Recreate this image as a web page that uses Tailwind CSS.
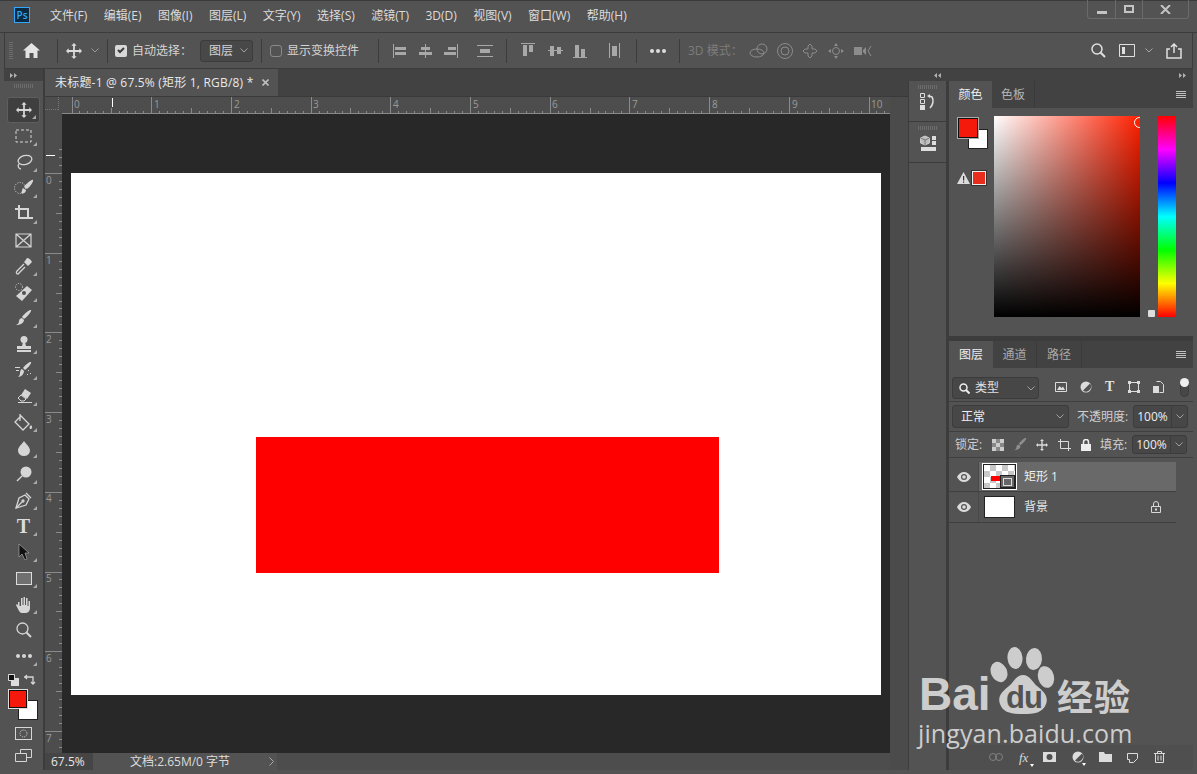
<!DOCTYPE html>
<html lang="zh-CN">
<head>
  <meta charset="UTF-8" />
  <title>未标题-1 @ 67.5% (矩形 1, RGB/8) *</title>
  <script src="https://cdn.jsdelivr.net/npm/@tailwindcss/browser@4"></script>
</head>
<body class="h-screen w-[1197px] overflow-hidden bg-[#535353] text-[12px] text-[#dcdcdc] font-['Open_Sans','Noto_Sans_CJK_SC',sans-serif] relative">

  <!-- shared icons -->
  <svg class="hidden">
    <symbol id="move" viewBox="0 0 18 18"><path fill="currentColor" d="M9 0l3 3h-2v5h5V6l3 3-3 3v-2h-5v5h2l-3 3-3-3h2v-5H3v2L0 9l3-3v2h5V3H6z"/></symbol>
    <symbol id="chev" viewBox="0 0 8 5"><path fill="none" stroke="currentColor" d="M.5.5L4 4 7.500.5"/></symbol>
    <symbol id="menu" viewBox="0 0 10 7"><path fill="none" stroke="currentColor" d="M0 .5h10M0 2.500h10M0 4.500h10M0 6.500h10"/></symbol>
    <symbol id="eye" viewBox="0 0 14 10"><path fill="currentColor" d="M7 0c3 0 5.500 2 7 5-1.500 3-4 5-7 5S1.500 8 0 5c1.500-3 4-5 7-5z"/><circle cx="7" cy="5" r="3" fill="#535353"/><circle cx="7" cy="5" r="1.800" fill="currentColor"/></symbol>
  </svg>

  <!-- title bar -->
  <header class="h-[33px] border-y border-t-[#3a3a3a] border-b-[#3c3c3c] flex items-start">
    <div class="ml-[14px] mt-[6px] w-[16px] h-[16px] border border-[#31a8ff] bg-[#0c2a40] text-[#31a8ff] text-[10px] leading-[14px] text-center font-semibold">Ps</div>
    <nav class="ml-[20px] mt-[6px] flex gap-[16.5px] leading-[18px] whitespace-nowrap">
      <span>文件(F)</span><span>编辑(E)</span><span>图像(I)</span><span>图层(L)</span><span>文字(Y)</span><span>选择(S)</span><span>滤镜(T)</span><span>3D(D)</span><span>视图(V)</span><span>窗口(W)</span><span>帮助(H)</span>
    </nav>
    <div class="ml-auto mr-[8px] h-[19px] w-[102px] -mt-px flex border border-t-0 border-[#6a6a6a] rounded-b-[3px] text-[#c4c4c4]">
      <div class="w-[28px] flex items-center justify-center border-r border-[#6a6a6a]"><i class="block w-[10px] h-[3px] mt-[6px] bg-current"></i></div>
      <div class="w-[27px] flex items-center justify-center border-r border-[#6a6a6a]"><i class="block w-[10px] h-[8px] border-2 border-current"></i></div>
      <div class="flex-1 flex items-center justify-center"><svg width="11" height="9" viewBox="0 0 11 9"><path stroke="currentColor" stroke-width="2" d="M1 0l9 9M10 0L1 9"/></svg></div>
    </div>
  </header>

  <!-- options bar -->
  <section class="h-[36px] mx-[4px] border-x border-b border-[#3c3c3c] flex items-center whitespace-nowrap text-[#d4d4d4]">
    <i class="ml-[4px] block w-[4px] h-[18px] bg-[repeating-linear-gradient(to_bottom,#6c6c6c_0_1px,transparent_1px_2px)]"></i>
    <svg class="ml-[10px] text-[#e4e4e4]" width="17" height="15" viewBox="0 0 17 15"><path fill="currentColor" d="M8.500 0L17 7.500h-2.500V15h-4v-5h-4v5h-4V7.500H0z"/></svg>
    <i class="ml-[17px] block w-px h-[24px] bg-[#3c3c3c]"></i>
    <svg class="ml-[8px] text-[#dcdcdc]" width="16" height="16"><use href="#move"/></svg>
    <svg class="ml-[9px] text-[#9a9a9a]" width="8" height="5"><use href="#chev"/></svg>
    <i class="ml-[8px] block w-px h-[24px] bg-[#3c3c3c]"></i>
    <span class="ml-[7px] w-[12px] h-[12px] rounded-[2px] bg-[#d8d8d8] flex items-center justify-center"><svg width="8" height="7" viewBox="0 0 8 7"><path fill="none" stroke="#3c3c3c" stroke-width="2" d="M1 3l2 2 4-4"/></svg></span>
    <span class="ml-[5px] w-[59px]">自动选择：</span>
    <div class="ml-[9px] w-[53px] h-[22px] rounded-[3px] border border-[#3c3c3c] bg-[#484848] flex items-center justify-between pl-[8px] pr-[4px]"><span>图层</span><svg class="text-[#a0a0a0]" width="8" height="5"><use href="#chev"/></svg></div>
    <i class="ml-[8px] block w-px h-[24px] bg-[#3c3c3c]"></i>
    <span class="ml-[8px] w-[12px] h-[12px] rounded-[3px] border border-[#8a8a8a]"></span>
    <span class="ml-[5px] w-[70px]">显示变换控件</span>
    <i class="ml-[21px] block w-px h-[24px] bg-[#3c3c3c]"></i>
    <svg class="ml-[14px] text-[#a8a8a8]" width="100" height="18" viewBox="0 0 100 18" fill="currentColor">
      <path d="M0 2h1v14H0zM2 5h11v3H2zM2 10h11v3H2z"/>
      <path d="M32 2h1v14h-1zM28 5h9v3h-9zM26 10h13v3H26z"/>
      <path d="M64 2h1v14h-1zM55 5h8v3h-8zM51 10h12v3H51z"/>
      <path d="M84 3h16v1H84zM84 14h16v1H84zM87 7h10v4H87z"/>
    </svg>
    <i class="ml-[13px] block w-px h-[24px] bg-[#3c3c3c]"></i>
    <svg class="ml-[14px] text-[#a8a8a8]" width="99" height="18" viewBox="0 0 99 18" fill="currentColor">
      <path d="M0 1h14v1H0zM2 3h4v11H2zM8 3h4v7H8z"/>
      <path d="M27 8h15v1H27zM29 4h4v10h-4zM36 5h4v7h-4z"/>
      <path d="M52 15h14v1H52zM54 3h4v12h-4zM60 7h4v8h-4z"/>
      <path d="M88 1h1v15h-1zM98 1h1v15h-1zM91 4h5v10h-5z"/>
    </svg>
    <i class="ml-[16px] block w-px h-[24px] bg-[#3c3c3c]"></i>
    <svg class="ml-[13px] text-[#dedede]" width="16" height="4" viewBox="0 0 16 4" fill="currentColor"><circle cx="2" cy="2" r="2"/><circle cx="8" cy="2" r="2"/><circle cx="14" cy="2" r="2"/></svg>
    <i class="ml-[13px] block w-px h-[24px] bg-[#3c3c3c]"></i>
    <span class="ml-[8px] w-[52px] text-[#7c7c7c]">3D 模式：</span>
    <svg class="ml-[9px] text-[#8c8c8c]" width="123" height="18" viewBox="0 0 123 18" fill="none" stroke="currentColor">
      <circle cx="13" cy="7" r="5"/><ellipse cx="8" cy="11" rx="7" ry="4"/>
      <circle cx="36" cy="9" r="7.500"/><circle cx="36" cy="9" r="4"/>
      <path d="M61 2l2 2v3h3l2 2-2 2h-3v3l-2 2-2-2v-3h-3l-2-2 2-2h3V4z"/>
      <circle cx="87" cy="9" r="3.500"/><path fill="currentColor" stroke="none" d="M87 1l2 3h-4zM87 17l2-3h-4zM79 9l3-2v4zM95 9l-3-2v4z"/>
      <path fill="currentColor" stroke="none" d="M105 5h8v8h-8zM114 8l3-3v8l-3-3z"/><path d="M122 4l-3 5 3 5"/>
    </svg>
    <svg class="ml-[219px] text-[#e0e0e0]" width="15" height="15" viewBox="0 0 15 15" fill="none" stroke="currentColor"><circle cx="6" cy="6" r="5" stroke-width="1.500"/><path stroke-width="2" d="M9.500 9.500L14 14"/></svg>
    <svg class="ml-[13px] text-[#e0e0e0]" width="16" height="13" viewBox="0 0 16 13"><path fill="none" stroke="currentColor" d="M.5.500h15v12H.5z"/><path fill="currentColor" d="M3 3h3v7H3z"/></svg>
    <svg class="ml-[10px] text-[#a8a8a8]" width="8" height="5"><use href="#chev"/></svg>
    <svg class="ml-[13px] text-[#e0e0e0]" width="16" height="16" viewBox="0 0 16 16" fill="none" stroke="currentColor" stroke-width="1.500"><path d="M4 6H1v9h14V6h-3M8 10V1M5 4l3-3 3 3"/></svg>
  </section>

  <main class="h-[701px] mx-[4px] flex bg-[#3c3c3c]">

    <!-- tools -->
    <aside class="w-[39px] mr-[2px] bg-[#535353] flex flex-col items-center text-[#d6d6d6]">
      <div class="w-full h-[12px] bg-[#424242] flex items-center pl-[6px] text-[#b0b0b0]"><svg width="7" height="5" viewBox="0 0 7 5" fill="currentColor"><path d="M0 0l3 2.500L0 5zM4 0l3 2.500L4 5z"/></svg></div>
      <i class="block mt-[3px] mb-[9px] w-[20px] h-[4px] bg-[repeating-linear-gradient(to_right,#6c6c6c_0_1px,transparent_1px_2px)]"></i>

      <div class="relative w-[33px] h-[26px] rounded-[3px] border border-[#5e5e5e] bg-[#3f3f3f] flex items-center justify-center"><svg width="16" height="16"><use href="#move"/></svg><i class="absolute right-[3px] bottom-[3px] border-l-[4px] border-b-[4px] border-l-transparent border-b-[#aaa]"></i></div>
      <div class="relative w-[33px] h-[26px] flex items-center justify-center"><svg width="17" height="14" viewBox="0 0 17 14"><rect x="1" y="1" width="15" height="12" fill="none" stroke="currentColor" stroke-dasharray="3 2"/></svg><i class="absolute right-[3px] bottom-[3px] border-l-[4px] border-b-[4px] border-l-transparent border-b-[#aaa]"></i></div>
      <div class="relative w-[33px] h-[26px] flex items-center justify-center"><svg width="18" height="16" viewBox="0 0 18 16" fill="none" stroke="currentColor" stroke-width="1.300"><ellipse cx="10" cy="6" rx="7" ry="4.500" transform="rotate(-15 10 6)"/><path d="M4 10c-2 2 0 5 2 5"/></svg><i class="absolute right-[3px] bottom-[3px] border-l-[4px] border-b-[4px] border-l-transparent border-b-[#aaa]"></i></div>
      <div class="relative w-[33px] h-[26px] flex items-center justify-center"><svg width="20" height="18" viewBox="0 0 20 18"><circle cx="6" cy="9" r="5.500" fill="none" stroke="currentColor" stroke-dasharray="1 1.500"/><path fill="currentColor" d="M19 1c1 1-3 7-6 9l-3-2c2-3 8-8 9-7zM9 9l3 2c0 3-3 4-5 3 1-1 1-4 2-5z"/></svg><i class="absolute right-[3px] bottom-[3px] border-l-[4px] border-b-[4px] border-l-transparent border-b-[#aaa]"></i></div>
      <div class="relative w-[33px] h-[26px] flex items-center justify-center"><svg width="18" height="18" viewBox="0 0 18 18" fill="none" stroke="currentColor" stroke-width="2"><path d="M0 4h13v10M4 0v13h14"/></svg><i class="absolute right-[3px] bottom-[3px] border-l-[4px] border-b-[4px] border-l-transparent border-b-[#aaa]"></i></div>
      <div class="relative w-[33px] h-[26px] flex items-center justify-center"><svg width="17" height="15" viewBox="0 0 17 15" fill="none" stroke="currentColor" stroke-width="1.200"><path d="M1 1h15v13H1zM1 1l15 13M16 1L1 14"/></svg></div>
      <div class="relative w-[33px] h-[26px] flex items-center justify-center"><svg width="17" height="17" viewBox="0 0 17 17"><path fill="currentColor" d="M12 0c2 0 4 2 5 4l-3 3-1 1-4-4 1-1z"/><path fill="none" stroke="currentColor" stroke-width="1.300" d="M9 6L2 13c-1 1-1 3 1 3l7-7"/></svg><i class="absolute right-[3px] bottom-[3px] border-l-[4px] border-b-[4px] border-l-transparent border-b-[#aaa]"></i></div>
      <div class="relative w-[33px] h-[26px] flex items-center justify-center"><svg width="19" height="19" viewBox="0 0 19 19"><circle cx="5" cy="4" r="3.500" fill="none" stroke="currentColor" stroke-dasharray="1 1.500"/><path fill="currentColor" d="M13 3l5 4-10 11-6-5z"/><circle cx="10" cy="10" r="2" fill="#535353"/></svg><i class="absolute right-[3px] bottom-[3px] border-l-[4px] border-b-[4px] border-l-transparent border-b-[#aaa]"></i></div>
      <div class="relative w-[33px] h-[26px] flex items-center justify-center"><svg width="16" height="16" viewBox="0 0 16 16" fill="currentColor"><path d="M15 0c1 1-4 7-7 9L6 7c2-3 8-8 9-7zM6 8l2 2c0 3-4 5-8 5 2-1 3-2 3-4 0-2 2-3 3-3z"/></svg><i class="absolute right-[3px] bottom-[3px] border-l-[4px] border-b-[4px] border-l-transparent border-b-[#aaa]"></i></div>
      <div class="relative w-[33px] h-[26px] flex items-center justify-center"><svg width="18" height="16" viewBox="0 0 18 16" fill="currentColor"><circle cx="9" cy="3.500" r="3.500"/><path d="M8 6h2l1 4h5v3H2v-3h5zM2 14h14v2H2z"/></svg><i class="absolute right-[3px] bottom-[3px] border-l-[4px] border-b-[4px] border-l-transparent border-b-[#aaa]"></i></div>
      <div class="relative w-[33px] h-[26px] flex items-center justify-center"><svg width="18" height="16" viewBox="0 0 18 16" fill="currentColor"><path d="M16 0c1 1-3 6-6 8L8 6c2-3 7-7 8-6zM7 7l2 2c0 3-3 6-6 6 1-1 2-2 2-4 0-2 1-4 2-4z"/><path d="M0 5h5v1H0zM1 8h3v1H1zM13 8h1v1h-1zM15 11h1v1h-1zM12 12h1v1h-1z"/></svg><i class="absolute right-[3px] bottom-[3px] border-l-[4px] border-b-[4px] border-l-transparent border-b-[#aaa]"></i></div>
      <div class="relative w-[33px] h-[26px] flex items-center justify-center"><svg width="16" height="14" viewBox="0 0 16 14"><path fill="currentColor" d="M9 0l6 4-4 6-6-4z"/><path fill="none" stroke="currentColor" d="M5 6l5 4-2 2H5L2 9zM2 13.500h14"/></svg><i class="absolute right-[3px] bottom-[3px] border-l-[4px] border-b-[4px] border-l-transparent border-b-[#aaa]"></i></div>
      <div class="relative w-[33px] h-[26px] flex items-center justify-center"><svg width="19" height="18" viewBox="0 0 19 18"><path fill="none" stroke="currentColor" stroke-width="1.300" d="M7 3l8 8-6 6-8-8zM6 1v7"/><path fill="currentColor" d="M17 12c1 1 2 3 0 4-2 0-2-2 0-4z"/></svg><i class="absolute right-[3px] bottom-[3px] border-l-[4px] border-b-[4px] border-l-transparent border-b-[#aaa]"></i></div>
      <div class="relative w-[33px] h-[26px] flex items-center justify-center"><svg width="12" height="15" viewBox="0 0 12 15" fill="currentColor"><path d="M6 0c2 3 6 6 6 9.500A6 5.500 0 010 9.500C0 6 4 3 6 0z"/></svg><i class="absolute right-[3px] bottom-[3px] border-l-[4px] border-b-[4px] border-l-transparent border-b-[#aaa]"></i></div>
      <div class="relative w-[33px] h-[26px] flex items-center justify-center"><svg width="16" height="16" viewBox="0 0 16 16"><circle cx="10" cy="6" r="5.500" fill="currentColor"/><path stroke="currentColor" stroke-width="1.500" d="M6 10l-5 5"/></svg><i class="absolute right-[3px] bottom-[3px] border-l-[4px] border-b-[4px] border-l-transparent border-b-[#aaa]"></i></div>
      <div class="relative w-[33px] h-[26px] flex items-center justify-center"><svg width="17" height="17" viewBox="0 0 17 17" fill="none" stroke="currentColor" stroke-width="1.300"><path d="M11 1l5 5M10 3L4 6 1 16l10-3 3-6z"/><path d="M1 16l6-6"/><circle cx="8" cy="9" r="1"/></svg><i class="absolute right-[3px] bottom-[3px] border-l-[4px] border-b-[4px] border-l-transparent border-b-[#aaa]"></i></div>
      <div class="relative w-[33px] h-[26px] flex items-center justify-center font-['Liberation_Serif',serif] font-bold text-[20px] leading-none text-[#dcdcdc]">T<i class="absolute right-[3px] bottom-[3px] border-l-[4px] border-b-[4px] border-l-transparent border-b-[#aaa]"></i></div>
      <div class="relative w-[33px] h-[26px] flex items-center justify-center"><svg width="12" height="16" viewBox="0 0 12 16"><path fill="#111" stroke="#bbb" stroke-width=".6" d="M1 0l10 9H7l2 6-2 1-3-6-3 3z"/></svg><i class="absolute right-[3px] bottom-[3px] border-l-[4px] border-b-[4px] border-l-transparent border-b-[#aaa]"></i></div>
      <div class="relative w-[33px] h-[26px] flex items-center justify-center"><i class="block w-[16px] h-[13px] border border-[#dcdcdc] bg-[#707070]"></i><i class="absolute right-[3px] bottom-[3px] border-l-[4px] border-b-[4px] border-l-transparent border-b-[#aaa]"></i></div>
      <div class="relative w-[33px] h-[26px] flex items-center justify-center"><svg width="17" height="17" viewBox="0 0 17 17" fill="currentColor"><path d="M3 6h1.500v4H6V2h1.500v7H8.500V1H10v8h1V2h1.500v8h1V5H15v7c0 3-2 5-5 5H7c-2 0-3-2-4-4l-2-4c0-1 1-1 2 0z"/></svg><i class="absolute right-[3px] bottom-[3px] border-l-[4px] border-b-[4px] border-l-transparent border-b-[#aaa]"></i></div>
      <div class="relative w-[33px] h-[26px] flex items-center justify-center"><svg width="16" height="16" viewBox="0 0 16 16" fill="none" stroke="currentColor"><circle cx="6.500" cy="6.500" r="5.500" stroke-width="1.300"/><path stroke-width="2" d="M10.500 10.500L15 15"/></svg></div>
      <div class="relative w-[33px] h-[26px] flex items-center justify-center"><svg width="16" height="4" viewBox="0 0 16 4" fill="currentColor"><circle cx="2" cy="2" r="2"/><circle cx="8" cy="2" r="2"/><circle cx="14" cy="2" r="2"/></svg><i class="absolute right-[3px] bottom-[3px] border-l-[4px] border-b-[4px] border-l-transparent border-b-[#aaa]"></i></div>

      <div class="mt-[4px] w-[33px] h-[14px] flex items-center justify-between px-[1px]">
        <svg width="11" height="12" viewBox="0 0 11 12"><path fill="#ddd" d="M3 4h8v8H3z"/><path fill="#111" stroke="#ddd" d="M.5.500h6v6h-6z"/></svg>
        <svg class="mr-[3px]" width="12" height="12" viewBox="0 0 12 12" fill="none" stroke="currentColor" stroke-width="1.300"><path d="M0 3h9v7M3 1L1 3l2 2M7 8l2 2 2-2"/></svg>
      </div>
      <div class="w-[31px] h-[31px] mt-[3px] relative">
        <i class="block absolute left-[10px] top-[10px] w-[20px] h-[20px] bg-white border border-[#222]"></i>
        <i class="block absolute left-[1px] top-0 w-[18px] h-[18px] bg-[#f5190b] border border-[#111] outline outline-[#ddd]"></i>
      </div>
      <i class="block mt-[6px] w-[17px] h-[13px] border border-[#d6d6d6] relative"><svg class="absolute left-[3px] top-0" width="9" height="11" viewBox="0 0 9 11"><circle cx="4.500" cy="5.500" r="3.500" fill="none" stroke="#d6d6d6" stroke-dasharray="1 1"/></svg></i>
      <svg class="mt-[9px]" width="17" height="13" viewBox="0 0 17 13" fill="#535353" stroke="currentColor"><path d="M5.500.500h11v8h-11z"/><path d="M.5 4.500h11v8H.5z"/></svg>
    </aside>

    <!-- document -->
    <div class="w-[863px] flex flex-col">
      <div class="h-[28px] bg-[#424242] border-b border-[#3a3a3a]">
        <div class="h-[27px] w-[233px] bg-[#535353] flex items-center pl-[10px] whitespace-nowrap text-[#e8e8e8]">
          <span class="w-[200px] tracking-[.2px]">未标题-1 @ 67.5% (矩形 1, RGB/8) *</span>
          <svg class="ml-[7px] text-[#bdbdbd]" width="7" height="7" viewBox="0 0 7 7"><path stroke="currentColor" stroke-width="1.600" d="M.5.500l6 6M6.500.500l-6 6"/></svg>
        </div>
      </div>
      <div class="flex-1 min-h-0 flex">
        <div class="w-[845px] flex flex-col">
          <!-- top ruler -->
          <div class="relative h-[17px] bg-[#4d4d4d]">
            <svg id="rulerTop" class="absolute inset-0 text-[#8a8a8a]" width="845" height="17">
              <path d="M0 12.500H14M13.500 0V13" fill="none" stroke="#777" stroke-dasharray="1 1"/>
              <g fill="#9a9a9a" font-size="10" font-family="Open Sans">
                <text x="29" y="11">0</text><text x="109" y="11">1</text><text x="189" y="11">2</text><text x="268" y="11">3</text><text x="348" y="11">4</text><text x="428" y="11">5</text><text x="507" y="11">6</text><text x="587" y="11">7</text><text x="667" y="11">8</text><text x="747" y="11">9</text><text x="826" y="11">10</text>
              </g>
            </svg>
            <i class="absolute left-[67px] top-[1px] w-px h-[9px] bg-white"></i>
          </div>
          <div class="flex-1 min-h-0 flex">
            <!-- left ruler -->
            <div class="relative w-[17px] bg-[#4d4d4d]">
              <svg id="rulerLeft" class="absolute inset-0 text-[#8a8a8a]" width="17" height="639">
                <g fill="#9a9a9a" font-size="10" font-family="Open Sans">
                  <text x="1" y="70">0</text><text x="1" y="150">1</text><text x="1" y="229">2</text><text x="1" y="309">3</text><text x="1" y="388">4</text><text x="1" y="468">5</text><text x="1" y="548">6</text><text x="1" y="628">7</text>
                </g>
              </svg>
              <i class="absolute left-[1px] top-[41px] w-[9px] h-px bg-white"></i>
            </div>
            <!-- canvas -->
            <div class="w-[828px] h-[639px] bg-[#282828] pl-[9px] pt-[59px]">
              <div class="w-[810px] h-[522px] bg-white pl-[185px] pt-[264px]">
                <div class="w-[463px] h-[136px] bg-[#ff0000]"></div>
              </div>
            </div>
          </div>
          <div class="h-[17px] flex items-center whitespace-nowrap bg-[#454545]">
            <span class="w-[48px] pl-[6px] text-[#e6e6e6]">67.5%</span>
            <div class="w-[184px] h-full bg-[#535353] flex items-center pl-[37px]">文档:2.65M/0 字节<svg class="ml-[39px] text-[#a8a8a8]" width="5" height="9" viewBox="0 0 5 9"><path fill="none" stroke="currentColor" d="M.5.500l4 4-4 4"/></svg></div>
            <div class="flex-1 h-full bg-[#4d4d4d]"></div>
          </div>
        </div>
        <div class="w-[18px] bg-[#4b4b4b]"></div>
      </div>
    </div>

    <!-- right dock -->
    <div class="w-[285px] flex flex-col">
      <div class="h-[12px] bg-[#424242] flex items-center justify-between pl-[26px] pr-[7px] text-[#b0b0b0]">
        <svg width="7" height="5" viewBox="0 0 7 5" fill="currentColor"><path d="M3 0L0 2.500 3 5zM7 0L4 2.500 7 5z"/></svg>
        <svg width="7" height="5" viewBox="0 0 7 5" fill="currentColor"><path d="M0 0l3 2.500L0 5zM4 0l3 2.500L4 5z"/></svg>
      </div>
      <div class="flex-1 min-h-0 flex">
        <div class="w-[37px] ml-[1px] mr-[3px] flex flex-col gap-px">
          <div class="h-[40px] bg-[#535353] flex flex-col items-center pt-[4px]">
            <i class="block w-[20px] h-[4px] bg-[repeating-linear-gradient(to_right,#6c6c6c_0_1px,transparent_1px_2px)]"></i>
            <svg class="mt-[4px]" width="16" height="18" viewBox="0 0 16 18"><path fill="none" stroke="#ddd" d="M.5.500h4v4h-4zM.5 6.500h4v4h-4z"/><path fill="#ddd" d="M0 12h5v5H0z"/><path fill="none" stroke="#ddd" stroke-width="1.600" d="M9 3l3 1c2 3 1 8-2 11"/><path fill="#ddd" d="M7 3l3-2v4z"/></svg>
          </div>
          <div class="h-[40px] bg-[#535353] flex flex-col items-center pt-[4px]">
            <i class="block w-[20px] h-[4px] bg-[repeating-linear-gradient(to_right,#6c6c6c_0_1px,transparent_1px_2px)]"></i>
            <svg class="mt-[5px]" width="16" height="17" viewBox="0 0 16 17"><path fill="#bbb" stroke="#ddd" stroke-width=".8" d="M5 1l4.500 2v5L5 10 .5 8V3z"/><path fill="none" stroke="#666" stroke-width=".8" d="M.5 3L5 5l4.500-2M5 5v5"/><path fill="#ddd" d="M12 1h4v4h-4zM12 6h4v4h-4zM1 12h15v4H1z"/></svg>
          </div>
          <div class="flex-1 bg-[#535353]"></div>
        </div>

        <div class="w-[244px] flex flex-col">
          <!-- color panel -->
          <section class="h-[255px] bg-[#535353]">
            <div class="h-[27px] bg-[#424242] flex">
              <div class="w-[43px] bg-[#535353] flex items-center justify-center text-[#eee]">颜色</div>
              <div class="w-[43px] flex items-center justify-center border-r border-[#3a3a3a] text-[#b4b4b4]">色板</div>
              <svg class="ml-auto mr-[7px] mt-[10px] text-[#c0c0c0]" width="10" height="7"><use href="#menu"/></svg>
            </div>
            <div class="flex pt-[8px] relative">
              <div class="w-[45px] pl-[9px] pt-[2px]">
                <div class="w-[30px] h-[31px] relative">
                  <i class="block absolute left-[10px] top-[11px] w-[20px] h-[20px] bg-white border border-[#222]"></i>
                  <i class="block absolute left-0 top-0 w-[20px] h-[20px] bg-[#f5190b] border border-[#111] outline outline-[#aaa]"></i>
                </div>
                <div class="mt-[22px] -ml-px flex items-center gap-[2px]">
                  <svg width="13" height="12" viewBox="0 0 13 12"><path fill="#dcdcdc" d="M6.500 0L13 12H0z"/><path fill="#333" d="M6 4h1.200v4.500H6zM6 9.500h1.200v1.200H6z"/></svg>
                  <i class="block w-[14px] h-[14px] bg-[#e92d1d] border border-[#eee] outline outline-[#333]"></i>
                </div>
              </div>
              <div class="relative w-[146px] h-[201px] bg-[linear-gradient(to_right,#fff,#ff2000)] overflow-hidden">
                <div class="absolute inset-0 bg-[linear-gradient(to_bottom,rgba(0,0,0,0),#000)]"></div>
                <i class="absolute right-[-5px] top-[1px] w-[11px] h-[11px] rounded-full border border-white"></i>
              </div>
              <div class="relative ml-[18px] w-[18px] h-[201px] bg-[linear-gradient(to_bottom,#f00,#f0f,#00f,#0ff,#0f0,#ff0,#f00)]">
                <i class="absolute left-[-10px] bottom-0 w-[7px] h-[7px] rounded-[1px] bg-[#ddd]"></i>
              </div>
            </div>
          </section>

          <div class="h-[5px]"></div>

          <!-- layers panel -->
          <section class="flex-1 min-h-0 bg-[#535353] flex flex-col">
            <div class="h-[27px] bg-[#424242] flex">
              <div class="w-[44px] bg-[#535353] flex items-center justify-center text-[#eee]">图层</div>
              <div class="w-[44px] flex items-center justify-center border-r border-[#3a3a3a] text-[#a8a8a8]">通道</div>
              <div class="w-[45px] flex items-center justify-center border-r border-[#3a3a3a] text-[#a8a8a8]">路径</div>
              <svg class="ml-auto mr-[7px] mt-[10px] text-[#c0c0c0]" width="10" height="7"><use href="#menu"/></svg>
            </div>

            <div class="h-[34px] border-b border-[#3f3f3f] flex items-start pt-[9px] pl-[3px] text-[#e0e0e0]">
              <div class="w-[87px] h-[22px] rounded-[3px] border border-[#3c3c3c] bg-[#474747] flex items-center pl-[6px] pr-[3px]">
                <svg width="11" height="11" viewBox="0 0 11 11" fill="none" stroke="#eee"><circle cx="4.500" cy="4.500" r="3.500" stroke-width="1.500"/><path stroke-width="2" d="M7 7l3.500 3.500"/></svg>
                <span class="ml-[5px]">类型</span>
                <svg class="ml-auto text-[#a0a0a0]" width="8" height="5"><use href="#chev"/></svg>
              </div>
              <div class="h-[20px] flex items-center">
                <svg class="ml-[16px] text-[#dcdcdc]" width="12" height="10" viewBox="0 0 12 10"><path fill="none" stroke="currentColor" d="M.5.500h11v9H.5z"/><path fill="currentColor" d="M2 8l2.500-4 2 2 1.500-1.500L10 8z"/></svg>
                <svg class="ml-[13px] text-[#dcdcdc]" width="12" height="12" viewBox="0 0 12 12"><circle cx="6" cy="6" r="5.500" fill="currentColor"/><path fill="#535353" d="M10 2.500a5 5 0 01-7 7z"/></svg>
                <span class="ml-[13px] w-[11px] text-[14px] font-bold leading-none font-['Liberation_Serif',serif]">T</span>
                <svg class="ml-[12px] text-[#dcdcdc]" width="12" height="12" viewBox="0 0 12 12"><path fill="none" stroke="currentColor" d="M1.500 1.500h9v9h-9z"/><path fill="currentColor" d="M0 0h3v3H0zM9 0h3v3H9zM0 9h3v3H0zM9 9h3v3H9z"/></svg>
                <svg class="ml-[13px] text-[#dcdcdc]" width="11" height="12" viewBox="0 0 11 12"><path fill="none" stroke="currentColor" d="M3.500.500h4l3 3v8h-4"/><path fill="currentColor" d="M0 5h6v7H0z"/></svg>
                <div class="relative ml-[16px] w-[9px] h-[19px] rounded-full border border-[#3c3c3c] bg-[#474747]"><i class="absolute left-[-1px] top-[-1px] w-[9px] h-[9px] rounded-full bg-[#eee]"></i></div>
              </div>
            </div>

            <div class="h-[30px] border-b border-[#3f3f3f] flex items-center pl-[3px]">
              <div class="w-[117px] h-[23px] rounded-[3px] border border-[#3c3c3c] bg-[#474747] flex items-center pl-[8px] pr-[4px] text-[#eee]"><span>正常</span><svg class="ml-auto text-[#a0a0a0]" width="8" height="5"><use href="#chev"/></svg></div>
              <span class="ml-[8px] w-[56px] whitespace-nowrap text-[#cfcfcf]">不透明度:</span>
              <div class="w-[55px] h-[23px] rounded-[3px] border border-[#3c3c3c] bg-[#474747] flex items-center"><span class="w-[38px] text-center border-r border-[#3c3c3c] leading-[21px] text-[#eee]">100%</span><svg class="ml-[4px] text-[#a0a0a0]" width="8" height="5"><use href="#chev"/></svg></div>
            </div>

            <div class="h-[26px] border-b border-[#3f3f3f] flex items-center pl-[6px] text-[#cfcfcf]">
              <span class="w-[30px] whitespace-nowrap">锁定:</span>
              <svg class="ml-[7px]" width="12" height="12" viewBox="0 0 12 12"><path fill="#888" d="M0 0h12v12H0z"/><path fill="#ccc" d="M0 0h4v4H0zM8 0h4v4H8zM4 4h4v4H4zM0 8h4v4H0zM8 8h4v4H8z"/></svg>
              <svg class="ml-[10px] text-[#8e8e8e]" width="13" height="13" viewBox="0 0 16 16" fill="currentColor"><path d="M15 0c1 1-4 7-7 9L6 7c2-3 8-8 9-7zM6 8l2 2c0 3-4 5-8 5 2-1 3-2 3-4 0-2 2-3 3-3z"/></svg>
              <svg class="ml-[9px] text-[#dcdcdc]" width="12" height="12"><use href="#move"/></svg>
              <svg class="ml-[10px] text-[#dcdcdc]" width="13" height="12" viewBox="0 0 13 12" fill="none" stroke="currentColor"><path d="M2.500 0v9.500H13M0 2.500h10.500V12"/></svg>
              <svg class="ml-[10px] text-[#eee]" width="10" height="12" viewBox="0 0 10 12"><path fill="currentColor" d="M0 5h10v7H0z"/><path fill="none" stroke="currentColor" stroke-width="1.500" d="M2.500 5V3a2.500 2.500 0 015 0v2"/></svg>
              <span class="ml-[9px] w-[32px] whitespace-nowrap">填充:</span>
              <div class="w-[55px] h-[19px] rounded-[3px] border border-[#3c3c3c] bg-[#474747] flex items-center"><span class="w-[38px] text-center border-r border-[#3c3c3c] leading-[17px] text-[#eee]">100%</span><svg class="ml-[4px] text-[#a0a0a0]" width="8" height="5"><use href="#chev"/></svg></div>
            </div>

            <div class="flex-1 min-h-0 flex flex-col pt-[4px]">
              <div class="h-[30px] w-[227px] flex items-center border-b border-[#3f3f3f]">
                <div class="w-[30px] flex justify-center text-[#dcdcdc] border-r border-[#4a4a4a] h-full items-center"><svg width="14" height="10"><use href="#eye"/></svg></div>
                <div class="flex-1 h-full bg-[#696969] flex items-center pl-[4px]">
                  <div class="relative w-[33px] h-[25px] border border-[#222] outline outline-white bg-[repeating-conic-gradient(#c8c8c8_0_25%,#fff_0_50%)] bg-[length:12px_12px]">
                    <i class="absolute left-[7px] top-[11px] w-[9px] h-[5px] bg-[#ff0000]"></i>
                    <i class="absolute right-0 bottom-0 w-[15px] h-[13px] border border-[#222] bg-[#666]"></i>
                    <i class="absolute right-[3px] bottom-[2px] w-[9px] h-[8px] border border-[#ddd]"></i>
                  </div>
                  <span class="ml-[8px] text-[#f0f0f0]">矩形 1</span>
                </div>
              </div>
              <div class="h-[31px] w-[227px] flex items-center border-b border-[#3f3f3f]">
                <div class="w-[30px] flex justify-center text-[#dcdcdc] border-r border-[#4a4a4a] h-full items-center"><svg width="14" height="10"><use href="#eye"/></svg></div>
                <div class="flex-1 h-full flex items-center pl-[5px]">
                  <i class="block w-[31px] h-[22px] bg-white border border-[#222]"></i>
                  <span class="ml-[9px] text-[#e6e6e6]">背景</span>
                  <svg class="ml-[103px] text-[#d8d8d8]" width="10" height="12" viewBox="0 0 10 12"><path fill="none" stroke="currentColor" d="M.5 5.500h9v6h-9zM2.500 5V3a2.500 2.500 0 015 0v2"/><path fill="currentColor" d="M4 7.500h2v2H4z"/></svg>
                </div>
              </div>
            </div>

            <div class="h-[25px] bg-[#4f4f4f] flex items-center pb-[1px] pl-[40px] text-[#dcdcdc]">
              <svg class="text-[#808080]" width="14" height="8" viewBox="0 0 14 8" fill="none" stroke="currentColor"><rect x=".5" y=".5" width="7" height="7" rx="3.500"/><rect x="6.500" y=".5" width="7" height="7" rx="3.500"/></svg>
              <span class="relative ml-[16px] w-[12px] italic font-['Liberation_Serif',serif] text-[13px] leading-none">fx<i class="absolute right-[-3px] bottom-[-3px] border-x-[2px] border-t-[3px] border-x-transparent border-t-white"></i></span>
              <svg class="ml-[12px]" width="13" height="10" viewBox="0 0 13 10"><path fill="currentColor" d="M0 0h13v10H0z"/><circle cx="6.500" cy="5" r="3" fill="#4f4f4f"/></svg>
              <span class="relative ml-[16px]"><svg class="block" width="12" height="12" viewBox="0 0 12 12"><circle cx="6" cy="6" r="5.500" fill="currentColor"/><path fill="#4f4f4f" d="M10 2.500a5 5 0 01-7 7z"/></svg><i class="absolute right-[-2px] bottom-[-3px] border-x-[2px] border-t-[3px] border-x-transparent border-t-white"></i></span>
              <svg class="ml-[15px]" width="13" height="10" viewBox="0 0 13 10" fill="currentColor"><path d="M0 0h5l1 2h7v8H0z"/></svg>
              <svg class="ml-[15px]" width="11" height="11" viewBox="0 0 11 11" fill="none" stroke="currentColor"><path d="M.5 1.500h10v5l-4 4h-4v-3h-2z"/></svg>
              <svg class="ml-[16px]" width="11" height="12" viewBox="0 0 11 12" fill="none" stroke="currentColor"><path d="M0 2.500h11M3.500 2V.5h4V2M1.500 3v8.500h8V3M4 4.500v5M7 4.500v5"/></svg>
            </div>
          </section>
        </div>
      </div>
    </div>
  </main>

  <!-- watermark, sits over the dock -->
  <div class="absolute left-[918px] top-[645px] w-[220px] h-[105px] pointer-events-none text-[#cdcdcd]">
    <span class="absolute left-[1px] top-[22px] font-['Liberation_Sans',sans-serif] font-bold text-[46px] leading-[54px]">Bai</span>
    <svg class="absolute left-[70px] top-0" width="70" height="72" viewBox="0 0 70 72" fill="currentColor">
      <ellipse cx="27" cy="13" rx="7.500" ry="11" transform="rotate(-5 27 13)"/>
      <ellipse cx="46" cy="14" rx="8" ry="11" transform="rotate(5 46 14)"/>
      <ellipse cx="11" cy="27" rx="8" ry="10.500" transform="rotate(-25 11 27)"/>
      <ellipse cx="58" cy="32" rx="8" ry="11" transform="rotate(-15 58 32)"/>
      <path d="M35 30c7 0 9 7 14 11 6 5 12 10 9 18-3 9-12 10-23 10-11 0-20-1-23-10-3-8 3-13 9-18 5-4 7-11 14-11z"/>
    </svg>
    <span class="absolute left-[88px] top-[36px] font-['Liberation_Sans',sans-serif] font-bold text-[31px] leading-[34px] text-[#535353] tracking-[-1px]">du</span>
    <span class="absolute left-[139px] top-[27px] font-['Noto_Sans_CJK_SC',sans-serif] font-bold text-[36px] leading-[46px] whitespace-nowrap tracking-[1px]">经验</span>
    <span class="absolute left-0 top-[71px] font-['Open_Sans',sans-serif] text-[25px] leading-[34px] whitespace-nowrap tracking-[0.1px]">jingyan.baidu.com</span>
  </div>

  <script>
    // ruler ticks: 79.7px per unit, ten divisions each
    const unit = 79.7;
    const topSvg = document.getElementById('rulerTop');
    let dTop = 'M17 16.500H845 ';
    for (let i = 0; i < 110; i++) {
      const x = Math.round(26.5 + i * unit / 10) + 0.5;
      if (x > 845) break;
      const len = i % 10 === 0 ? 17 : i % 10 === 5 ? 6 : 3;
      dTop += `M${x} 17V${17 - len} `;
    }
    const leftSvg = document.getElementById('rulerLeft');
    let dLeft = '';
    for (let i = -3; i < 80; i++) {
      const y = Math.round(59 + i * unit / 10) + 0.5;
      if (y < 0 || y > 639) continue;
      const m = ((i % 10) + 10) % 10;
      const len = m === 0 ? 17 : m === 5 ? 6 : 3;
      dLeft += `M17 ${y}H${17 - len} `;
    }
    for (const [svg, d] of [[topSvg, dTop], [leftSvg, dLeft]]) {
      const path = document.createElementNS('http://www.w3.org/2000/svg', 'path');
      path.setAttribute('d', d);
      path.setAttribute('stroke', 'currentColor');
      path.setAttribute('fill', 'none');
      svg.appendChild(path);
    }
  </script>
</body>
</html>
